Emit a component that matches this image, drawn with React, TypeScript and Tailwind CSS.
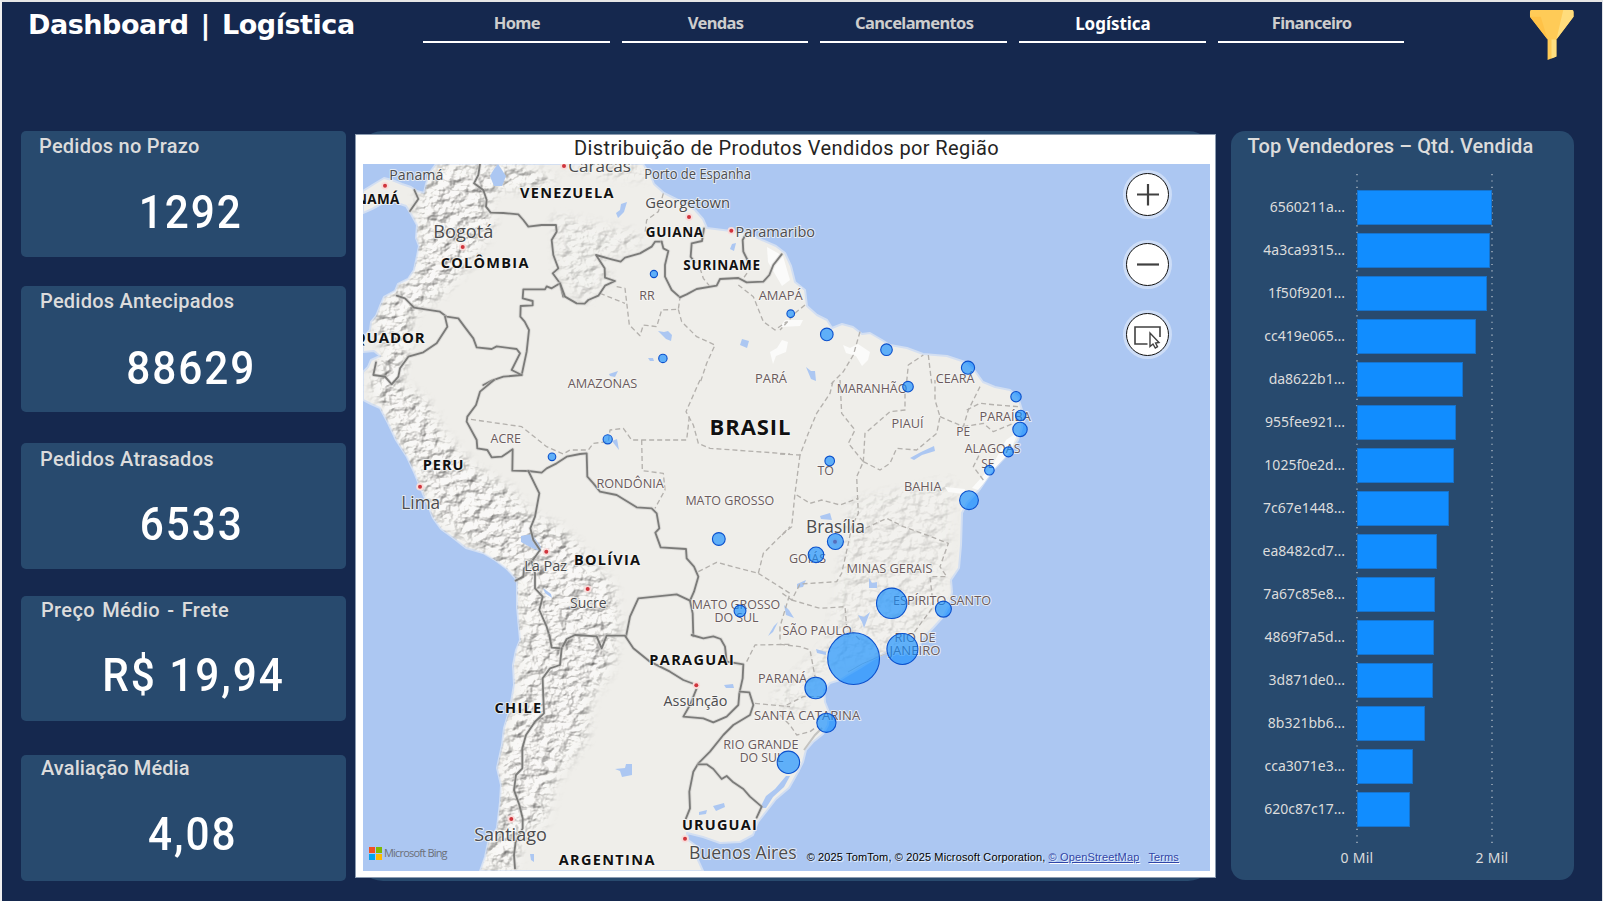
import React from "react";

type Kpi = { label: string; value: string; card: string; labelClass: string; valueClass: string };

const kpis: Kpi[] = [
  { label: "Pedidos no Prazo", value: "1292", card: "h-[126px]", labelClass: "pt-[1px] pl-[18px] tracking-[0.25px]", valueClass: "pt-[23.500px] pl-[15px]" },
  { label: "Pedidos Antecipados", value: "88629", card: "mt-[29px] h-[126px]", labelClass: "pt-[1px] pl-[19px] tracking-[0.25px]", valueClass: "pt-[25px] pl-[15px]" },
  { label: "Pedidos Atrasados", value: "6533", card: "mt-[31px] h-[126px]", labelClass: "pt-[2px] pl-[19px] tracking-[0.3px]", valueClass: "pt-[23px] pl-[16px]" },
  { label: "Preço Médio - Frete", value: "R$ 19,94", card: "mt-[27px] h-[125px]", labelClass: "pt-0 pl-[20px] tracking-[0.35px] [word-spacing:2px]", valueClass: "pt-[23px] pl-[19px]" },
  { label: "Avaliação Média", value: "4,08", card: "mt-[34px] h-[126px]", labelClass: "-mt-[1px] pl-[20px] tracking-[0.1px]", valueClass: "pt-[24px] pl-[18px]" },
];

const tabs = [
  { name: "Home", active: false },
  { name: "Vendas", active: false },
  { name: "Cancelamentos", active: false },
  { name: "Logística", active: true },
  { name: "Financeiro", active: false },
];

const sellers: { id: string; width: number }[] = [
  { id: "6560211a...", width: 135.5 },
  { id: "4a3ca9315...", width: 133.2 },
  { id: "1f50f9201...", width: 130.8 },
  { id: "cc419e065...", width: 119 },
  { id: "da8622b1...", width: 106.4 },
  { id: "955fee921...", width: 99.5 },
  { id: "1025f0e2d...", width: 97.2 },
  { id: "7c67e1448...", width: 92.5 },
  { id: "ea8482cd7...", width: 80.5 },
  { id: "7a67c85e8...", width: 78.2 },
  { id: "4869f7a5d...", width: 77.5 },
  { id: "3d871de0...", width: 76.5 },
  { id: "8b321bb6...", width: 68 },
  { id: "cca3071e3...", width: 56.5 },
  { id: "620c87c17...", width: 53.5 },
];

/* label, x, baseline, width, font size */
type MapLabel = [string, number, number, number, number];

const countries: MapLabel[] = [
  ["VENEZUELA", 520, 198, 93.5, 14.5],
  ["COLÔMBIA", 440.7, 268, 87.7, 14.5],
  ["GUIANA", 645.7, 237, 57.5, 13.5],
  ["SURINAME", 683.3, 270, 76.7, 13.5],
  ["EQUADOR", 344.5, 343.3, 80.2, 15],
  ["PANAMÁ", 337.5, 204.3, 61.8, 13.5],
  ["PERU", 422.7, 470, 40.7, 14.5],
  ["BOLÍVIA", 574, 565.3, 66, 14.5],
  ["BRASIL", 709.5, 435.3, 81, 22],
  ["CHILE", 494.5, 712.7, 46.7, 14.5],
  ["ARGENTINA", 558.7, 865, 95.7, 14.5],
  ["PARAGUAI", 649.3, 665.3, 84.5, 14.5],
  ["URUGUAI", 682, 830, 74.7, 14.5],
];

const cities: MapLabel[] = [
  ["Panamá", 389.3, 180, 54, 15],
  ["Bogotá", 433.3, 238.3, 60, 18],
  ["Caracas", 568.3, 171.5, 62.7, 17],
  ["Porto de Espanha", 644.2, 178.5, 106.8, 14],
  ["Georgetown", 645.3, 208.3, 84.7, 15],
  ["Paramaribo", 735.5, 237, 79.5, 15],
  ["Lima", 401.3, 509, 38.9, 18],
  ["La Paz", 524.2, 570.5, 42.8, 15],
  ["Sucre", 570, 608.3, 36.5, 15],
  ["Brasília", 806, 532.7, 59, 18],
  ["Assunção", 663.5, 705.7, 64, 15],
  ["Santiago", 474.2, 841, 72.6, 18],
  ["Buenos Aires", 689, 859, 107.6, 18],
];

const states: MapLabel[] = [
  ["RR", 639.3, 299.7, 15.4, 13],
  ["AMAPÁ", 758.7, 300.3, 44, 13],
  ["AMAZONAS", 567.7, 388, 69.6, 13],
  ["PARÁ", 755, 383, 32, 13],
  ["CEARÁ", 935.7, 383, 38.8, 13],
  ["MARANHÃO", 836.7, 393.3, 70.7, 13],
  ["PIAUÍ", 891.5, 428.3, 32, 13],
  ["PARAÍBA", 979.5, 421, 51.3, 13],
  ["PE", 956.3, 436, 13.9, 13],
  ["ALAGOAS", 964.7, 453.3, 55.8, 13],
  ["SE", 981.3, 468, 13.2, 13],
  ["TO", 817.5, 474.5, 16.5, 13],
  ["BAHIA", 904, 491, 37.5, 13],
  ["GOIÁS", 789, 563, 37, 13],
  ["MINAS GERAIS", 846.5, 573, 86, 13],
  ["ESPÍRITO SANTO", 893, 605.3, 98, 13],
  ["SÃO PAULO", 782.5, 635.3, 69.3, 13],
  ["RIO DE", 894.5, 642, 41, 13],
  ["JANEIRO", 889.5, 655.3, 51, 13],
  ["PARANÁ", 758, 683, 49, 13],
  ["SANTA CATARINA", 754, 720.3, 106.2, 13],
  ["RIO GRANDE", 723.3, 749, 75.2, 13],
  ["DO SUL", 739.7, 762, 43.7, 13],
  ["ACRE", 490.5, 443, 30.4, 13],
  ["RONDÔNIA", 596.4, 488, 67.4, 13],
  ["MATO GROSSO", 685.4, 505.3, 88.8, 13],
  ["MATO GROSSO", 691.8, 609.3, 88.4, 13],
  ["DO SUL", 714.4, 622, 44.2, 13],
];

const cityDots: [number, number][] = [
  [385, 185.7], [462.7, 247], [564, 166], [689, 217], [731.3, 230.7], [420, 486.7],
  [546.3, 551.7], [587.7, 589], [696.3, 685.3], [511.3, 819], [685, 838.7], [835, 541.7],
];

/* x, y, radius */
const bubbles: [number, number, number][] = [
  [653.9, 274, 3.6], [662.9, 358.4, 4.2], [790.7, 313.7, 3.8], [826.8, 334.4, 6.3],
  [886.5, 349.7, 5.8], [968, 367.7, 6.6], [607.7, 439.3, 4.6], [552, 456.8, 3.8],
  [718.8, 539, 6.4], [740, 611, 5.9], [908, 386.7, 5.3], [1016, 396.7, 5.2],
  [1020.7, 415.5, 5.2], [1020, 429.4, 7.2], [1008.4, 451.9, 5], [989.4, 470.2, 4.8],
  [969, 500.2, 9.4], [829.7, 460.9, 4.8], [835.4, 541.5, 8], [816, 554.8, 7.8],
  [891.7, 603.3, 15.2], [943.4, 609.1, 8], [853.6, 658.6, 25.9], [902.4, 649, 15.5],
  [815.7, 688, 10.8], [826.4, 722.8, 9.6], [788.4, 762.3, 11.2],
];

const land =
  "M436 164 L430 172 L426 184 L424 193 L417 191 L411 187 L402 184 L392 180 L384 178 L374 184 L363 191 L363 213 L372 209 L383 203 L393 200 L400 204 L406 206 L411 214 L417 225 L416 238 L419 246 L417 256 L414 270 L408 279 L398 284 L395 291 L384 297 L380 306 L376 316 L371 322 L370 330 L363 338 L363 352 L374 351 L380 356 L371 360 L368 367 L363 372 L363 400 L371 404 L380 408 L388 423 L396 440 L407 457 L414 472 L420 487 L427 503 L433 518 L441 529 L452 537 L466 548 L483 553 L495 560 L507 569 L517 580 L517 607 L520 640 L516 650 L513 665 L514 685 L510 708 L504 728 L502 745 L497 768 L501 785 L500 802 L497 828 L488 843 L485 857 L480 871 L703 871 L698 860 L699 848 L688 840 L687 833 L703 837 L720 843 L740 842 L753 835 L758 822 L769 808 L776 799 L789 788 L798 772 L803 762 L806 750 L813 742 L823 734 L828 725 L829 712 L825 702 L824 690 L830 683 L840 680 L848 675 L860 668 L874 659 L885 653 L902 654 L918 652 L922 639 L933 628 L943 617 L949 606 L952 592 L951 580 L959 568 L961 545 L962 513 L967 503 L980 489 L993 470 L1010 452 L1018 440 L1022 428 L1022 410 L1018 397 L1010 390 L995 387 L983 382 L975 371 L965 362 L947 356 L923 354 L907 348 L890 345 L882 340 L870 333 L862 334 L853 327 L842 324 L832 328 L827 320 L817 315 L807 306 L805 290 L795 282 L791 266 L785 253 L776 246 L762 240 L747 233 L723 230 L707 228 L703 219 L695 210 L680 201 L664 193 L654 184 L650 174 L643 164 Z";

const andes =
  "M440 164 L515 164 L555 178 L548 185 L500 190 L488 200 L492 225 L470 262 L440 295 L412 315 L410 345 L400 385 L425 400 L440 430 L470 465 L510 490 L530 515 L560 528 L590 560 L612 585 L618 620 L612 665 L590 700 L585 740 L555 780 L545 820 L520 840 L515 871 L482 871 L500 800 L500 760 L518 690 L520 620 L517 578 L483 553 L435 520 L414 470 L385 415 L370 385 L385 350 L372 320 L390 292 L415 275 L419 240 L416 205 Z";

const highlands = "M553 215 L640 235 L640 245 L600 260 L610 280 L585 303 L560 280 Z M560 164 L640 164 L650 178 L600 176 Z";

/* Polylines drawn on a grid three times finer than the map. */
const borders: { origin: string; lines: string[] }[] = [
  {
    origin: "translate(350 125) scale(0.33333)",
    lines: [
      "M390 117 L385 150 L372 175 L400 195 L410 225 L408 245 L422 263 L460 264 L505 268 L520 285 L535 305 L575 300 L618 300 L620 320 L605 345 L610 390 L625 430 L608 445 L630 475 L640 515",
      "M630 475 L605 490 L590 484 L585 493 L520 493 L518 520 L548 528 L548 541 L512 543 L511 575 L524 590 L537 615 L530 680 L515 750",
      "M630 475 L645 515 L680 535 L704 536 L715 525 L745 512 L765 482 L795 468 L765 458 L764 430 L738 390 L785 403 L812 410 L825 398 L870 385 L905 365 L915 350 L935 350",
      "M935 350 L940 370 L955 378 L945 420 L945 455 L965 495 L990 517",
      "M990 517 L1010 508 L1040 492 L1100 482 L1110 462 L1165 459 L1190 472 L1240 470 L1258 450 L1270 420 L1295 388",
      "M1062 310 L1056 348 L1025 355 L1022 395 L1034 412",
      "M1192 320 L1178 345 L1180 380 L1200 420",
      "M193 195 L205 222 L180 258",
      "M140 512 L165 520 L192 548 L270 560 L290 575 L325 580 L345 607 L370 640 L380 667 L425 672 L440 664 L500 672 L510 685 L485 735 L515 750 L460 755 L425 767 L400 780",
      "M285 575 L292 605 L260 655 L220 682 L175 695 L150 730 L145 755 L125 778 L105 755 L70 750 L78 712",
    ],
  },
  {
    origin: "translate(350 380) scale(0.33333)",
    lines: [
      "M432 0 L390 35 L378 75 L352 110 L350 125 L380 180 L382 205 L412 210 L425 232 L455 230 L488 208 L487 272 L535 273 L575 278 L590 265 L620 250 L650 230 L690 222 L710 220 L712 290 L730 310 L750 335 L800 345 L860 382 L905 385 L920 400 L928 445 L916 458 L932 502 L1008 507 L1010 535 L1032 560 L1045 590 L1032 635 L1020 662",
      "M535 273 L568 340 L555 410 L541 445 L550 480 L570 510 L545 545 L522 565 L520 590 L497 602",
      "M545 545 L555 580 L555 625 L578 650 L568 690 L590 740 L602 780",
      "M828 770 L840 710 L865 655 L980 643 L1020 662 L1028 700 L1030 768",
    ],
  },
  {
    origin: "translate(350 635) scale(0.33333)",
    lines: [
      "M598 0 L605 38 L635 40 L650 12 L675 0 L740 4 L755 40 L770 2 L825 2 L850 40 L900 80 L960 110 L1000 135 L1040 150",
      "M1025 0 L1060 10 L1090 4 L1112 12 L1125 35 L1130 80 L1180 88 L1178 130 L1168 175 L1165 210 L1130 245 L1090 262 L1060 250 L1000 245 L1020 210 L1040 160",
      "M635 40 L630 90 L600 100 L578 130 L580 190 L582 235 L555 260 L528 300 L517 340 L517 400 L498 420 L492 465 L508 510 L518 550 L518 580 L497 620 L492 660 L495 700",
      "M1170 170 L1198 172 L1210 210 L1200 240 L1150 270 L1120 300 L1080 350 L1045 385 L1030 410 L1018 470 L1020 520 L1008 550",
      "M1045 388 L1070 388 L1090 402 L1115 432 L1130 423 L1150 442 L1180 462 L1200 485 L1235 515 L1220 548",
    ],
  },
];

const divisions: { origin: string; lines: string[] }[] = [
  {
    origin: "translate(350 125) scale(0.33333)",
    lines: [
      "M750 505 L825 535 M800 485 L825 490 L838 600 L870 632 L880 600 L920 605 L935 555 L985 553 L990 517",
      "M985 553 L995 590 L1040 635 L1095 660 L1070 715 L1050 775",
      "M1165 480 L1210 515 L1240 590 L1275 615 L1310 590",
      "M940 205 L925 260 L890 285 L885 325",
      "M1050 430 L1060 460 L1078 482 M1205 425 L1180 460",
    ],
  },
  {
    origin: "translate(780 125) scale(0.33333)",
    lines: [
      "M240 620 L220 690 L190 740 L150 780",
      "M380 770 L385 720 L430 690 M445 690 L455 775",
      "M75 540 L50 560 L0 615",
    ],
  },
  {
    origin: "translate(350 380) scale(0.33333)",
    lines: [
      "M1050 0 L1008 95 L1030 135 L1045 190 L1080 205 L1320 222",
      "M1018 110 L1010 180 L845 180 L820 145 L780 150 L775 185 L730 190 L715 210 L660 210 L640 222 L590 200 L515 140 L355 117",
      "M875 180 L877 272 L940 280 L945 330 L915 385",
      "M1045 575 L1100 547 L1225 580 L1240 520 L1320 440 M1225 580 L1320 640 L1290 740 L1290 780",
    ],
  },
  {
    origin: "translate(780 380) scale(0.33333)",
    lines: [
      "M0 222 L60 225 L85 160 L110 100 L150 40 L160 0",
      "M60 225 L45 340 L35 440 L0 470",
      "M180 0 L185 100 L225 150 L205 190 L250 245 L230 290 L235 400 L215 440 L205 490 L185 580 L170 605 L60 612 L35 660 L0 635",
      "M50 345 L90 370 L125 360 L180 375 L235 355",
      "M250 245 L300 270 L330 250 L350 205 L410 210 L470 160 L480 110 L465 60 L465 0",
      "M250 245 L255 160 L330 95 L375 90 L375 20",
      "M480 110 L550 140 L565 90 L600 20",
      "M235 455 L320 415 L370 440 L440 465 L505 490 L480 560 L500 590 L450 590 L460 680 L400 760",
      "M35 660 L120 685 L195 680 L200 740 L240 780",
      "M560 90 L600 70 L650 75 L715 80 M550 140 L610 130 L640 155 L700 130",
      "M610 300 L580 260 L600 220",
    ],
  },
  { origin: "translate(350 635) scale(0.33333)", lines: ["M1190 80 L1215 30 L1320 28", "M1215 205 L1320 215"] },
  {
    origin: "translate(780 635) scale(0.33333)",
    lines: ["M0 28 L60 35 L90 45 L105 125 L130 135", "M20 210 L70 185 L130 185", "M0 240 L30 270 L50 300 L90 290 L110 275"],
  },
];

const lakes = [
  "M494 169 L498 164 L506 176 L502 186 L494 186 L490 176 Z",
  "M621 204 L627 202 L624 212 L618 218 L616 213 L620 210 Z",
  "M658 331 L664 332 L668 331 L672 335 L671 341 L666 339 Z",
  "M648 358 L653 358 L654 361 L650 361 Z",
  "M609 374 L618 371 L615 377 L610 376 Z",
  "M742 339 L749 341 L747 348 L740 345 Z",
  "M732 244 L736 243 L734 251 L730 249 Z",
  "M806 367 L811 371 L815 371 L816 381 L811 379 Z",
  "M910 458 L921 452 L934 446 L935 451 L922 455 L914 460 Z",
  "M521 536 L532 534 L541 547 L541 552 L530 547 L521 542 Z",
  "M612 441 L617 439 L619 450 L615 445 Z",
  "M543 588 L551 594 L552 598 L545 593 Z",
  "M615 769 L625 768 L626 764 L632 764 L632 775 L622 777 L620 771 Z",
  "M713 806 L724 803 L725 807 L716 811 Z M699 812 L707 810 L706 814 L699 815 Z",
  "M724 685 L733 684 L734 688 L726 688 Z",
  "M820 516 L830 513 L832 520 L821 519 Z",
  "M869 578 L872 583 L877 582 L877 588 L869 588 Z",
  "M858 615 L864 617 L870 612 L867 620 L864 628 L862 622 Z",
  "M784 605 L789 610 L794 618 L786 615 Z",
  "M797 584 L806 580 L803 587 L797 588 Z",
  "M816 649 L826 652 L826 655 L817 653 Z",
  "M778 622 L773 632 L768 636 L774 626 Z",
  "M760 808 L766 796 L775 789 L786 776 L790 776 L784 787 L773 797 L766 808 Z",
  "M530 854 L534 854 L534 862 L531 860 Z",
];

const urban = [
  "M767 247 L783 256 L790 280 L782 286 L768 262 Z",
  "M843 345 L850 348 L858 344 L870 352 L868 360 L862 366 L856 356 L846 353 Z",
  "M1018 432 L1010 452 L992 472 L985 482 L978 490 L972 488 L992 466 L1006 440 Z",
  "M785 320 L803 320 L800 326 L780 327 Z",
  "M770 352 L777 348 L782 340 L788 342 L786 352 L776 356 L773 364 Z",
  "M945 487 L965 489 L964 494 L948 492 Z",
];

function Funnel() {
  return (
    <svg className="h-[50px] w-[45px]" viewBox="0 0 46 51" preserveAspectRatio="none" aria-hidden="true">
      <path d="M2 0H44Q45.500 0 45.500 2V7L28 30V47.500L19 51V30L1 7V2Q1 0 2 0Z" fill="#ffcb57" />
      <path d="M1 7H12L19 30Z" fill="#ffc247" />
      <path d="M35 0H44Q45.500 0 45.500 2V7L28 30Z" fill="#ffdc7c" />
      <path d="M23 30H28V47.500L23 49.500Z" fill="#ffdf80" />
    </svg>
  );
}

function LabelText({ items, className, adjust }: { items: MapLabel[]; className: string; adjust: "spacing" | "spacingAndGlyphs" }) {
  return (
    <g className={className}>
      {items.map(([text, x, y, width, size]) => (
        <text key={`${text}${x}`} x={x} y={y} fontSize={size} textLength={width} lengthAdjust={adjust}>
          {text}
        </text>
      ))}
    </g>
  );
}

function MapCanvas() {
  return (
    <svg className="block h-[707px] w-[847px] bg-[#acc7f2]" viewBox="363 164 847 707">
      <defs>
        <clipPath id="landClip">
          <path d={land} />
        </clipPath>
        <filter id="relief" x="0" y="0" width="100%" height="100%" colorInterpolationFilters="sRGB">
          <feTurbulence type="fractalNoise" baseFrequency="0.085 0.11" numOctaves="5" seed="8" result="noise" />
          <feDiffuseLighting in="noise" lightingColor="#fbfaf7" surfaceScale="4" diffuseConstant="1.17">
            <feDistantLight azimuth="225" elevation="56" />
          </feDiffuseLighting>
        </filter>
        <filter id="softEdge" x="-10%" y="-10%" width="120%" height="120%">
          <feGaussianBlur stdDeviation="6" />
        </filter>
        <mask id="mountains" maskUnits="userSpaceOnUse" x="363" y="164" width="847" height="707">
          <g filter="url(#softEdge)">
            <path d={andes} fill="#9c9c9c" />
            <path d={highlands} fill="#4c4c4c" />
            <path d="M850 500 L955 480 L945 600 L900 650 L820 670 L800 720 L770 700 L830 640 Z" fill="#303030" />
          </g>
        </mask>
      </defs>
      <path d={land} fill="#efeeea" stroke="#d3dff2" strokeWidth="2" strokeLinejoin="round" />
      <g clipPath="url(#landClip)">
        <g mask="url(#mountains)">
          <rect x="363" y="164" width="847" height="707" filter="url(#relief)" />
        </g>
        {urban.map((d) => (
          <path key={d} d={d} fill="#fbfbfa" />
        ))}
      </g>
      {lakes.map((d) => (
        <path key={d} d={d} fill="#acc7f2" />
      ))}
      <path d="M848 672 L862 664 L885 654 L900 650" fill="none" stroke="#c4c3c0" strokeWidth="1" />
      <path d="M804 750 L815 735 L822 728" fill="none" stroke="#c4c3c0" strokeWidth="2" />
      {divisions.map(({ origin, lines }) => (
        <g key={origin} transform={origin} fill="none" stroke="#b4b1ad" strokeWidth="4" strokeDasharray="15 9" strokeLinejoin="round">
          {lines.map((d) => (
            <path key={d} d={d} />
          ))}
        </g>
      ))}
      {borders.map(({ origin, lines }) => (
        <g key={origin} transform={origin} fill="none" strokeLinejoin="round" strokeLinecap="round">
          {lines.map((d) => (
            <g key={d}>
              <path d={d} stroke="#c9c8c5" strokeWidth="11" strokeOpacity="0.5" />
              <path d={d} stroke="#7b7b79" strokeWidth="5.500" />
            </g>
          ))}
        </g>
      ))}
      {cityDots.map(([x, y]) => (
        <g key={`${x}-${y}`}>
          <circle cx={x} cy={y} r="3.800" fill="#f8dcda" />
          <circle cx={x} cy={y} r="2" fill="#d0343c" />
        </g>
      ))}
      <g stroke="#f7f7f5" strokeWidth="2" strokeOpacity="0.75" strokeLinejoin="round" paintOrder="stroke">
        <LabelText items={states} adjust="spacingAndGlyphs" className="fill-[#6a5b5d] font-['Open_Sans',sans-serif] font-medium" />
        <LabelText items={cities} adjust="spacingAndGlyphs" className="fill-[#4c4c4e] font-['Open_Sans',sans-serif] font-medium" />
        <LabelText items={countries} adjust="spacing" className="fill-[#111111] font-['Open_Sans',sans-serif] font-bold" />
      </g>
      {bubbles.map(([x, y, r]) => (
        <circle key={`${x}-${y}`} cx={x} cy={y} r={r} fill="#118dff" fillOpacity="0.65" stroke="#0b50cc" strokeWidth="1.100" />
      ))}
    </svg>
  );
}

function MapButton({ children, label }: { children: React.ReactNode; label: string }) {
  return (
    <button aria-label={label} className="flex size-[49px] items-center justify-center rounded-full bg-white/40">
      <span className="flex size-[43px] items-center justify-center rounded-full border-[1.5px] border-[#111111] bg-white">
        <svg className="size-[40px]" viewBox="0 0 40 40" fill="none" stroke="#404040">
          {children}
        </svg>
      </span>
    </button>
  );
}

function MapPanel() {
  return (
    <section className="w-[861px] shrink-0 rounded-[28px] bg-[#284a6e] pt-[3px] pb-[3px]">
      <div className="flex h-[744px] flex-col border border-[#8b9bb0] bg-white pr-[5px] pl-[7px]">
        <h2 className="h-[29px] text-center font-['Roboto',sans-serif] text-[20px] leading-[27px] tracking-[0.39px] text-[#252423]">
          Distribuição de Produtos Vendidos por Região
        </h2>
        <div className="relative h-[707px] w-[847px] overflow-hidden">
          <MapCanvas />
          <div className="absolute top-[6px] right-[38px] flex flex-col gap-[21px]">
            <MapButton label="Ampliar">
              <path d="M9 19.500H31M20 9V30.500" strokeWidth="2.200" />
            </MapButton>
            <MapButton label="Reduzir">
              <path d="M9 19.500H31" strokeWidth="2.200" />
            </MapButton>
            <MapButton label="Selecionar">
              <path d="M19.500 29H7V12H32V22" strokeWidth="1.600" />
              <path d="M22 18V31.500L25 29L27.300 33L29.500 31.700L27.600 28L31 27.500Z" fill="#ffffff" strokeWidth="1.400" />
            </MapButton>
          </div>
          <div className="absolute bottom-[11px] left-[6px] flex items-center gap-[2px]">
            <span className="grid grid-cols-2 gap-[1px]">
              <i className="size-[6px] bg-[#f25022]" />
              <i className="size-[6px] bg-[#7fba00]" />
              <i className="size-[6px] bg-[#00a4ef]" />
              <i className="size-[6px] bg-[#ffb900]" />
            </span>
            <span className="font-['Open_Sans',sans-serif] text-[11px] leading-[14px] font-medium tracking-[-0.8px] text-[#6b6f78]">Microsoft Bing</span>
          </div>
          <p className="absolute right-[31px] bottom-[7px] flex font-['Liberation_Sans',sans-serif] text-[11px] leading-[14px] tracking-[0.13px] whitespace-pre text-black [text-shadow:1px_1px_1px_#ffffff]">
            <span>© 2025 TomTom, © 2025 Microsoft Corporation, </span>
            <a className="text-[#2f45a8] underline">© OpenStreetMap</a>
            <a className="ml-[9px] text-[#2f45a8] underline">Terms</a>
          </p>
        </div>
      </div>
    </section>
  );
}

function GridLine() {
  return (
    <svg className="h-[671px] w-[2px]" viewBox="0 0 2 671">
      <path d="M1 0V671" stroke="#b6bfca" strokeWidth="1.300" strokeDasharray="1.200 5.220" />
    </svg>
  );
}

function SellersPanel() {
  return (
    <section className="flex h-[749px] w-[343px] shrink-0 flex-col rounded-[14px] bg-[#284a6e]">
      <h2 className="h-[43px] pt-[1px] pl-[16.500px] font-['Roboto',sans-serif] text-[20px] leading-[28px] font-medium tracking-[0.1px] text-[#dcdcdc]">
        Top Vendedores – Qtd. Vendida
      </h2>
      <div className="relative h-[671px]">
        <div className="absolute top-0 left-[124.500px] flex gap-[133.500px]">
          <GridLine />
          <GridLine />
        </div>
        <ul className="relative pt-[12px]">
          {sellers.map(({ id, width }) => (
            <li key={id} className="flex h-[43px] items-center font-['Noto_Sans',sans-serif] text-[14px] text-[#dcdcdc]">
              <span className="-mt-[1px] w-[114px] text-right leading-[34px]">{id}</span>
              <span className="ml-[11.500px] h-[34.400px] border border-[#1573ce] bg-[#118dff]" style={{ width }} />
            </li>
          ))}
        </ul>
      </div>
      <div className="flex pl-[86px] font-['Noto_Sans',sans-serif] text-[14px] leading-[26px] tracking-[0.3px] text-[#dcdcdc]">
        <span className="w-[80px] text-center">0 Mil</span>
        <span className="ml-[55px] w-[80px] text-center">2 Mil</span>
      </div>
    </section>
  );
}

export default function App() {
  return (
    <div className="h-[901px] w-[1603px] overflow-hidden border-t-2 border-r border-l-2 border-t-[#e6e6e6] border-r-[#dfe1e6] border-l-[#f0f0f0] bg-[#15284e]">
      <header className="flex h-[129px] items-start">
        <h1 className="w-[421px] shrink-0 pt-[5px] pl-[26px] font-['DejaVu_Sans',sans-serif] text-[27px] leading-[36px] font-bold tracking-[-0.45px] whitespace-nowrap text-white [word-spacing:3px]">
          Dashboard | Logística
        </h1>
        <nav className="flex gap-[12px]">
          {tabs.map(({ name, active }) => (
            <a
              key={name}
              className={
                active
                  ? "flex h-[41px] w-[186.700px] items-start justify-center border-b-[2.500px] border-white pt-[10px] pl-[1px] font-['Noto_Sans',sans-serif] text-[17px] leading-[24px] font-bold tracking-[-0.05px] text-white"
                  : "flex h-[41px] w-[186.700px] items-start justify-center border-b-[2.500px] border-white pt-[9px] pl-[1px] font-['Noto_Sans',sans-serif] text-[16.500px] leading-[24px] font-bold tracking-[-0.650px] text-[#cdcdcd]"
              }
            >
              {name}
            </a>
          ))}
        </nav>
        <div className="mt-[8px] ml-[124.500px]">
          <Funnel />
        </div>
      </header>
      <main className="flex items-start pl-[19px]">
        <div className="w-[325px] shrink-0">
          {kpis.map(({ label, value, card, labelClass, valueClass }) => (
            <section key={label} className={`flow-root rounded-[5px] bg-[#284a6e] font-['Roboto',sans-serif] ${card}`}>
              <h3 className={`text-[20px] leading-[28px] font-medium text-[#dcdcdc] ${labelClass}`}>{label}</h3>
              <p className={`text-center text-[47px] leading-[56px] font-medium text-white ${valueClass}`}>
                <span className="inline-block scale-x-90 tracking-[2.2px]">{value}</span>
              </p>
            </section>
          ))}
        </div>
        <div className="ml-[9px] flex gap-[15px]">
          <MapPanel />
          <SellersPanel />
        </div>
      </main>
    </div>
  );
}
